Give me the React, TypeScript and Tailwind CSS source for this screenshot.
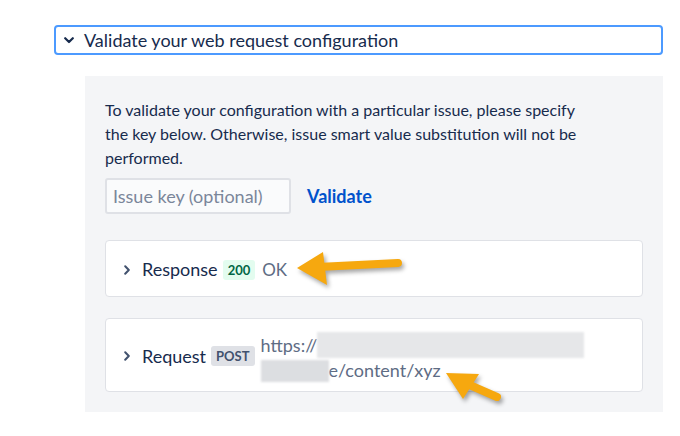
import React from "react";

function ChevronDown() {
  return (
    <svg width="10" height="7" viewBox="0 0 10 7" className="shrink-0">
      <polyline points="1.2,1.2 5,5 8.8,1.2" fill="none" stroke="#172b4d" strokeWidth="2.2" strokeLinecap="round" strokeLinejoin="round" />
    </svg>
  );
}

function ChevronRight() {
  return (
    <svg width="6" height="10" viewBox="0 0 6 10" className="shrink-0">
      <polyline points="1.2,1.2 4.8,5 1.2,8.8" fill="none" stroke="#42526e" strokeWidth="2" strokeLinecap="round" strokeLinejoin="round" />
    </svg>
  );
}

export default function App() {
  return (
    <div
      className="relative w-[680px] h-[436px] bg-white overflow-hidden text-[#172b4d]"
      style={{ fontFamily: "Lato, 'Open Sans', sans-serif" }}
    >
      <div className="ml-[54px] mt-[25px] w-[609px] h-[30px] border-2 border-[#4c9aff] rounded-[4px] flex items-center pl-[8px]">
        <ChevronDown />
        <span className="ml-[10px] text-[18px] leading-[22px]">Validate your web request configuration</span>
      </div>

      <div className="ml-[85px] mt-[21px] w-[578px] bg-[#f4f5f7] px-5 pt-[22px] pb-5">
        <p className="text-[16px] leading-[24px] text-[#172b4d]">
          To validate your configuration with a particular issue, please specify
          <br />
          the key below. Otherwise, issue smart value substitution will not be
          <br />
          performed.
        </p>
        <div className="mt-2 flex items-center gap-4">
          <input
            placeholder="Issue key (optional)"
            className="w-[186px] h-[36px] border-2 border-[#dfe1e6] bg-[#fafbfc] rounded-[3px] px-[6px] text-[18px] outline-none placeholder:text-[#7a869a]"
          />
          <span className="text-[18px] font-bold text-[#0052cc]">Validate</span>
        </div>

        <div className="mt-[26px] h-[57px] bg-white border border-[#dfe1e6] rounded-[4px] flex items-center pl-[18px] pt-[2px]">
          <ChevronRight />
          <span className="ml-[12px] text-[18px]">Response</span>
          <span className="ml-[5px] h-[20px] px-[5px] rounded-[3px] bg-[#e3fcef] text-[#006644] text-[13px] font-bold leading-[20px]">200</span>
          <span className="ml-[7px] text-[17px] text-[#5e6c84]">OK</span>
        </div>

        <div className="mt-[21px] h-[74px] bg-white border border-[#dfe1e6] rounded-[4px] flex items-center pl-[18px] pt-[2px]">
          <ChevronRight />
          <span className="ml-[12px] text-[18px]">Request</span>
          <span className="ml-[5px] h-[20px] px-[5px] rounded-[3px] bg-[#dfe1e6] text-[#42526e] text-[13px] font-bold leading-[20px]">POST</span>
          <div className="ml-[6px] pt-[3px] text-[18px] leading-[25px] text-[#5e6c84]">
            <div className="flex items-center">
              <span>https://</span>
              <span className="inline-block w-[267px] h-[26px] bg-[#e6e7e9] blur-[1px]" />
            </div>
            <div className="flex items-center">
              <span className="inline-block w-[68px] h-[22px] bg-[#dcdee1] blur-[1px]" />
              <span>e/content/xyz</span>
            </div>
          </div>
        </div>
      </div>

      <svg
        className="absolute inset-0 pointer-events-none"
        width="680"
        height="436"
        viewBox="0 0 680 436"
        style={{ filter: "drop-shadow(2px 3px 2px rgba(0,0,0,0.35))" }}
      >
        <line x1="398" y1="263" x2="318" y2="267" stroke="#f6a80f" strokeWidth="8" strokeLinecap="round" />
        <polygon points="297,268 323,252 327,285" fill="#f6a80f" />
        <line x1="497" y1="397" x2="465" y2="383" stroke="#f6a80f" strokeWidth="8" strokeLinecap="round" />
        <polygon points="446,373 479,374 463,399" fill="#f6a80f" />
      </svg>
    </div>
  );
}
